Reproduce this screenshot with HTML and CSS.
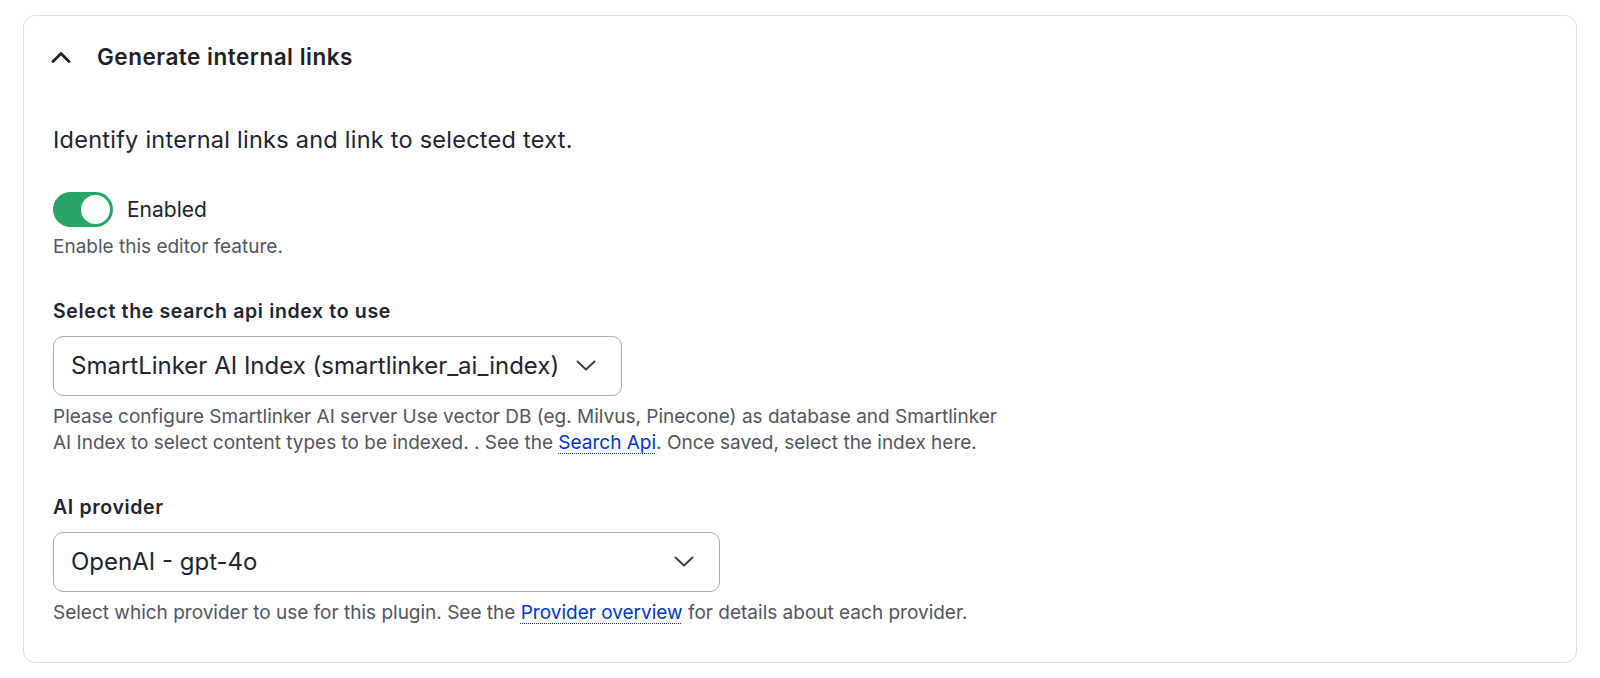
FILE: index.html
```html
<!DOCTYPE html>
<html lang="en">
<head>
<meta charset="utf-8">
<title>Generate internal links</title>
<link rel="stylesheet" href="styles.css">
</head>
<body>
<section class="card">
  <div class="summary">
    <svg class="summary-chevron" width="20" height="12" viewBox="0 0 20 12" aria-hidden="true">
      <polyline points="2,10.5 10,2.5 18,10.5" fill="none" stroke="#1f2029" stroke-width="2.8" stroke-linecap="round" stroke-linejoin="round"/>
    </svg>
    <span class="summary-title">Generate internal links</span>
  </div>
  <div class="content">
    <p class="intro">Identify internal links and link to selected text.</p>

    <div class="form-item form-item--first">
      <div class="toggle-row">
        <span class="toggle"><span class="toggle-knob"></span></span>
        <span class="toggle-label">Enabled</span>
      </div>
      <div class="help help--toggle">Enable this editor feature.</div>
    </div>

    <div class="form-item">
      <div class="label">Select the search api index to use</div>
      <div class="select select--index">
        <span class="select-value">SmartLinker AI Index (smartlinker_ai_index)</span>
        <svg class="select-chevron" width="20" height="11" viewBox="0 0 20 11" aria-hidden="true">
          <polyline points="1.5,1.5 10,9.5 18.5,1.5" fill="none" stroke="#3b3c45" stroke-width="1.9" stroke-linecap="round" stroke-linejoin="round"/>
        </svg>
      </div>
      <div class="help help--wrap">Please configure Smartlinker AI server Use vector DB (eg. Milvus, Pinecone) as database and Smartlinker AI Index to select content types to be indexed. . See the <a href="#" class="link">Search Api</a>. Once saved, select the index here.</div>
    </div>

    <div class="form-item form-item--last">
      <div class="label">AI provider</div>
      <div class="select select--provider">
        <span class="select-value">OpenAI - gpt-4o</span>
        <svg class="select-chevron" width="20" height="11" viewBox="0 0 20 11" aria-hidden="true">
          <polyline points="1.5,1.5 10,9.5 18.5,1.5" fill="none" stroke="#3b3c45" stroke-width="1.9" stroke-linecap="round" stroke-linejoin="round"/>
        </svg>
      </div>
      <div class="help">Select which provider to use for this plugin. See the <a href="#" class="link">Provider overview</a> for details about each provider.</div>
    </div>
  </div>
</section>
</body>
</html>
```

FILE: styles.css
```css
html, body {
  margin: 0;
  padding: 0;
  background: #ffffff;
}

body {
  font-family: Inter, "Liberation Sans", Arial, sans-serif;
  color: #222330;
  padding: 15px 23px 0 23px;
}

.card {
  border: 1px solid #dedee0;
  border-radius: 12px;
  background: #ffffff;
  padding: 0 0 36px 0;
}

.summary {
  display: flex;
  align-items: center;
  padding: 26px 0 0 27px;
  height: 30px;
}

.summary-chevron {
  display: block;
  flex: none;
  width: 20px;
  height: 12px;
}

.summary-title {
  margin-left: 26px;
  font-size: 22.5px;
  line-height: 30px;
  font-weight: 600;
  letter-spacing: 0.5px;
  color: #1f2029;
}

.content {
  padding: 0 0 0 29px;
}

.intro {
  margin: 52px 0 0 0;
  font-size: 23.5px;
  line-height: 32px;
  letter-spacing: 0.25px;
  color: #222330;
}

.form-item {
  margin-top: 37px;
}

.form-item--first {
  margin-top: 36px;
}

.form-item--last {
  margin-top: 37px;
}

.toggle-row {
  display: flex;
  align-items: center;
  gap: 14px;
}

.toggle {
  box-sizing: border-box;
  display: flex;
  align-items: center;
  justify-content: flex-end;
  width: 60px;
  height: 35px;
  padding: 0 3px;
  border-radius: 18px;
  background: #27a566;
}

.toggle-knob {
  width: 29px;
  height: 29px;
  border-radius: 50%;
  background: #ffffff;
}

.toggle-label {
  font-size: 21px;
  line-height: 28px;
  color: #222330;
}

.label {
  font-size: 19.5px;
  line-height: 27px;
  font-weight: 600;
  letter-spacing: 0.65px;
  color: #222330;
}

.select {
  box-sizing: border-box;
  display: flex;
  align-items: center;
  justify-content: space-between;
  height: 60px;
  margin-top: 11px;
  padding: 0 25px 0 17px;
  border: 1px solid #a9aab0;
  border-radius: 10px;
  background: #ffffff;
}

.select--index {
  width: 569px;
}

.select--provider {
  width: 667px;
}

.select-value {
  font-size: 24px;
  line-height: 30px;
  color: #222330;
  white-space: nowrap;
}

.select-chevron {
  display: block;
  flex: none;
  width: 20px;
  height: 11px;
}

.help {
  margin-top: 8px;
  font-size: 19px;
  line-height: 26.5px;
  color: #545560;
}

.help--toggle {
  margin-top: 7px;
}

.help--wrap {
  max-width: 955px;
}

.link {
  color: #0036d6;
  text-decoration: underline dotted;
  text-decoration-thickness: 1px;
  text-underline-offset: 4px;
}
```
